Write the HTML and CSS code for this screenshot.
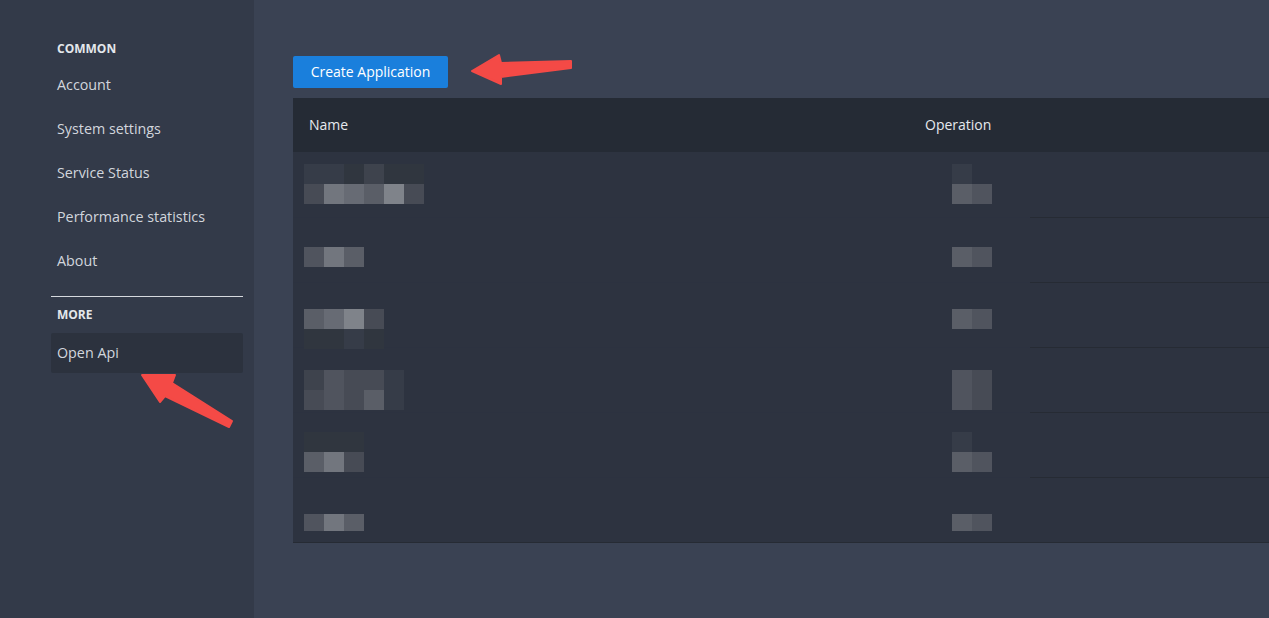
FILE: index.html
```html
<!DOCTYPE html>
<html lang="en">
<head>
  <meta charset="UTF-8">
  <meta name="viewport" content="width=device-width, initial-scale=1.0">
  <title>Settings - Open Api</title>
  <link rel="stylesheet" href="styles.css">
</head>
<body>
  <div class="layout">
    <aside class="sidebar">
      <div class="nav-label">COMMON</div>
      <a class="nav-item" href="#">Account</a>
      <a class="nav-item" href="#">System settings</a>
      <a class="nav-item" href="#">Service Status</a>
      <a class="nav-item" href="#">Performance statistics</a>
      <a class="nav-item" href="#">About</a>
      <hr class="nav-divider">
      <div class="nav-label more">MORE</div>
      <a class="nav-item active" href="#">Open Api</a>
    </aside>

    <main class="content">
      <button class="btn">Create Application</button>

      <table class="app-table">
        <thead>
          <tr>
            <th class="col-name">Name</th>
            <th class="col-op">Operation</th>
            <th></th>
          </tr>
        </thead>
        <tbody>
          <!-- names and actions are pixelated in the screenshot -->
          <tr class="r1">
            <td>
              <div class="mosaic">
                <div class="mrow"><span class="px s2"></span><span class="px s2"></span><span class="px s1"></span><span class="px s3"></span><span class="px s1"></span><span class="px s1"></span></div>
                <div class="mrow"><span class="px s4"></span><span class="px s8"></span><span class="px s7"></span><span class="px s6"></span><span class="px s9"></span><span class="px s4"></span></div>
              </div>
            </td>
            <td>
              <div class="mosaic">
                <div class="mrow"><span class="px s2"></span></div>
                <div class="mrow"><span class="px s6"></span><span class="px s5"></span></div>
              </div>
            </td>
            <td></td>
          </tr>
          <tr class="r2">
            <td>
              <div class="mosaic">
                <div class="mrow"><span class="px s5"></span><span class="px s8"></span><span class="px s6"></span></div>
              </div>
            </td>
            <td>
              <div class="mosaic">
                <div class="mrow"><span class="px s6"></span><span class="px s5"></span></div>
              </div>
            </td>
            <td></td>
          </tr>
          <tr class="r3">
            <td>
              <div class="mosaic">
                <div class="mrow"><span class="px s6"></span><span class="px s7"></span><span class="px s9"></span><span class="px s4"></span></div>
                <div class="mrow"><span class="px s1"></span><span class="px s1"></span><span class="px s2"></span><span class="px s1"></span></div>
              </div>
            </td>
            <td>
              <div class="mosaic">
                <div class="mrow"><span class="px s6"></span><span class="px s5"></span></div>
              </div>
            </td>
            <td></td>
          </tr>
          <tr class="r4">
            <td>
              <div class="mosaic">
                <div class="mrow"><span class="px s3"></span><span class="px s5"></span><span class="px s4"></span><span class="px s4"></span><span class="px s2"></span></div>
                <div class="mrow"><span class="px s4"></span><span class="px s5"></span><span class="px s4"></span><span class="px s6"></span><span class="px s2"></span></div>
              </div>
            </td>
            <td>
              <div class="mosaic">
                <div class="mrow"><span class="px s5"></span><span class="px s4"></span></div>
                <div class="mrow"><span class="px s5"></span><span class="px s4"></span></div>
              </div>
            </td>
            <td></td>
          </tr>
          <tr class="r5">
            <td>
              <div class="mosaic">
                <div class="mrow"><span class="px s1"></span><span class="px s1"></span><span class="px s1"></span></div>
                <div class="mrow"><span class="px s6"></span><span class="px s8"></span><span class="px s4"></span></div>
              </div>
            </td>
            <td>
              <div class="mosaic">
                <div class="mrow"><span class="px s2"></span></div>
                <div class="mrow"><span class="px s6"></span><span class="px s5"></span></div>
              </div>
            </td>
            <td></td>
          </tr>
          <tr class="r6">
            <td>
              <div class="mosaic">
                <div class="mrow"><span class="px short s5"></span><span class="px short s8"></span><span class="px short s6"></span></div>
              </div>
            </td>
            <td>
              <div class="mosaic">
                <div class="mrow"><span class="px short s6"></span><span class="px short s5"></span></div>
              </div>
            </td>
            <td></td>
          </tr>
        </tbody>
      </table>
    </main>
  </div>

  <!-- red annotation arrows drawn over the screenshot -->
  <svg class="annotations" width="1269" height="618" viewBox="0 0 1269 618">
    <polygon points="472,71 499,55 501,63 571,61 571,68 501,77 501,84" />
    <polygon points="142,375 175,375 172,383 232,421 229,427 165,396 160,402" />
  </svg>
</body>
</html>
```

FILE: styles.css
```css
* {
  box-sizing: border-box;
}
html, body {
  height: 100%;
}
body {
  margin: 0;
  overflow: hidden;
  font-family: "Open Sans", "Noto Sans", sans-serif;
  font-size: 14px;
  color: #d8dce3;
  background-color: #3a4253;
  position: relative;
}
.layout {
  display: flex;
  height: 100%;
}

/* sidebar */
.sidebar {
  width: 254px;
  flex-shrink: 0;
  background-color: #333a49;
  padding: 39px 11px 0 51px;
  display: flex;
  flex-direction: column;
}
.nav-label {
  height: 20px;
  line-height: 20px;
  padding-left: 6px;
  font-size: 12px;
  font-weight: 700;
  color: #e4e7ec;
  margin-bottom: 6px;
}
.nav-label.more {
  margin-top: 8px;
  margin-bottom: 8px;
}
.nav-item {
  display: block;
  height: 40px;
  line-height: 40px;
  padding-left: 6px;
  margin-bottom: 4px;
  font-size: 14.3px;
  color: #d2d6dd;
  text-decoration: none;
  border-radius: 2px;
}
.nav-item.active {
  background-color: #2c323e;
}
.nav-divider {
  border: none;
  border-top: 1px solid #d6d9de;
  margin: 11px 0 0;
}

/* main */
.content {
  flex: 1;
  padding: 56px 0 0 39px;
  overflow: hidden;
}
.btn {
  display: block;
  height: 32px;
  width: 155px;
  padding: 0 0 1px;
  border: none;
  border-radius: 2px;
  background-color: #1a7fdc;
  color: #fff;
  font-family: inherit;
  font-size: 14px;
  cursor: pointer;
}
.app-table {
  margin-top: 10px;
  width: 100%;
  border-collapse: collapse;
  background-color: #2d3340;
}
.app-table th {
  height: 54px;
  padding: 0 16px 1px;
  background-color: #252b35;
  text-align: left;
  font-weight: 400;
  color: #e6e9ee;
}
.app-table th.col-name {
  width: 616px;
}
.app-table th.col-op {
  width: 121px;
}
.app-table td {
  height: 65px;
  vertical-align: top;
  padding: 0 0 0 11px;
  border-bottom: 1px solid #2c3240;
}
.app-table td + td {
  padding-left: 43px;
}
.app-table td:last-child {
  border-bottom-color: #262b34;
}
.app-table tr:last-child td {
  border-bottom-color: #262b34;
}
.r1 td { padding-top: 12px; }
.r2 td { padding-top: 29px; }
.r3 td { padding-top: 26px; }
.r4 td { padding-top: 22px; }
.r5 td { padding-top: 19px; }
.r6 td { padding-top: 36px; }

/* pixelated placeholder blocks */
.mosaic {
  height: 20px;
}
.mrow {
  display: flex;
}
.px {
  width: 20px;
  height: 20px;
}
.px.short {
  height: 17px;
}
.s1 { background-color: #30363f; }
.s2 { background-color: #363c48; }
.s3 { background-color: #3e434d; }
.s4 { background-color: #474b55; }
.s5 { background-color: #50545e; }
.s6 { background-color: #5a5e67; }
.s7 { background-color: #676b74; }
.s8 { background-color: #72767e; }
.s9 { background-color: #7f838a; }

.annotations {
  position: absolute;
  left: 0;
  top: 0;
  pointer-events: none;
}
.annotations polygon {
  fill: #f44a46;
  stroke: #f44a46;
  stroke-width: 2;
  stroke-linejoin: round;
}
```
